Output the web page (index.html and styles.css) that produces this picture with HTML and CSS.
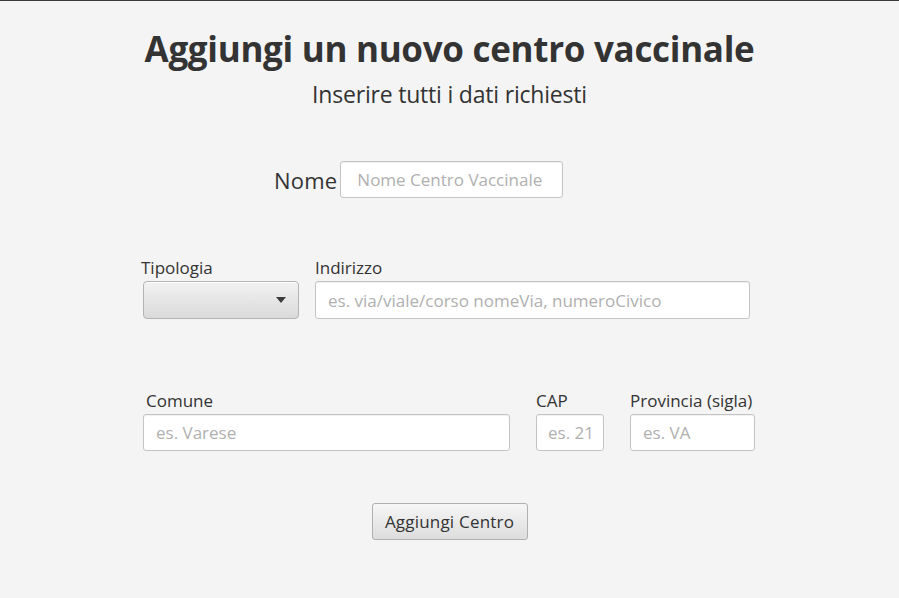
FILE: index.html
```html
<!DOCTYPE html>
<html lang="it">
<head>
<meta charset="utf-8">
<link rel="stylesheet" href="styles.css">
</head>
<body>
<div class="page">
  <h1 class="title">Aggiungi un nuovo centro vaccinale</h1>
  <p class="subtitle">Inserire tutti i dati richiesti</p>

  <div class="row-nome">
    <span class="big-label">Nome</span>
    <div class="field w-nome"><span class="ph">Nome Centro Vaccinale</span></div>
  </div>

  <div class="row row-2">
    <div class="col col-tipo">
      <span class="label">Tipologia</span>
      <div class="combo"><span class="arrow"></span></div>
    </div>
    <div class="col col-ind">
      <span class="label">Indirizzo</span>
      <div class="field w-ind"><span class="ph">es. via/viale/corso nomeVia, numeroCivico</span></div>
    </div>
  </div>

  <div class="row row-3">
    <div class="col col-com">
      <span class="label lbl-com">Comune</span>
      <div class="field w-com"><span class="ph">es. Varese</span></div>
    </div>
    <div class="col col-cap">
      <span class="label">CAP</span>
      <div class="field w-cap"><span class="ph">es. 21</span></div>
    </div>
    <div class="col col-prov">
      <span class="label">Provincia (sigla)</span>
      <div class="field w-prov"><span class="ph">es. VA</span></div>
    </div>
  </div>

  <div class="actions">
    <button class="btn">Aggiungi Centro</button>
  </div>
</div>
</body>
</html>
```

FILE: styles.css
```css
html, body {
  margin: 0;
  padding: 0;
}
body {
  background: #f4f4f4;
  border-top: 1px solid #3a3a3a;
  font-family: "Open Sans", "Noto Sans", sans-serif;
  color: #333333;
  width: 899px;
  height: 597px;
  overflow: hidden;
}
.page {
  display: flex;
  flex-direction: column;
}
.title {
  margin: 24px 0 0 0;
  text-align: center;
  font-size: 35px;
  font-weight: 700;
  line-height: 48px;
  letter-spacing: -0.3px;
  color: #333;
}
.subtitle {
  margin: 6px 0 0 0;
  text-align: center;
  font-size: 23px;
  line-height: 30px;
  letter-spacing: -0.2px;
}
.row-nome {
  display: flex;
  align-items: center;
  margin: 52px 0 0 274px;
  gap: 3px;
}
.big-label {
  font-size: 22px;
  letter-spacing: 0.2px;
  line-height: 30px;
}
.field {
  box-sizing: border-box;
  height: 37px;
  background: #fff;
  border: 1px solid #c4c4c4;
  border-radius: 3px;
  box-shadow: inset 0 1px 1px rgba(0,0,0,0.06);
  display: flex;
  align-items: center;
  padding-left: 12px;
  overflow: hidden;
  white-space: nowrap;
}
.ph {
  font-size: 17px;
  color: #b0b0b0;
  letter-spacing: 0;
}
.w-nome { width: 223px; padding-left: 16px; }
.row {
  display: flex;
  align-items: flex-end;
}
.col {
  display: flex;
  flex-direction: column;
}
.label {
  font-size: 17px;
  line-height: 22px;
  letter-spacing: 0;
  margin-bottom: 2px;
}
.row-2 {
  margin: 59px 0 0 141px;
}
.col-tipo { width: 174px; }
.combo {
  position: relative;
  box-sizing: border-box;
  width: 156px;
  height: 38px;
  margin-left: 2px;
  border: 1px solid #b4b4b4;
  border-radius: 4px;
  background: linear-gradient(#f2f2f2, #dadada);
  box-shadow: inset 0 1px 0 rgba(255,255,255,0.8);
}
.arrow {
  position: absolute;
  right: 12px;
  top: 15px;
  width: 0;
  height: 0;
  border-left: 5px solid transparent;
  border-right: 5px solid transparent;
  border-top: 6px solid #3c3c3c;
}
.w-ind { width: 435px; height: 38px; }
.row-3 {
  margin: 71px 0 0 143px;
}
.lbl-com { margin-left: 3px; }
.col-com { width: 393px; }
.w-com { width: 367px; }
.col-cap { width: 94px; }
.w-cap { width: 68px; padding-left: 11px; }
.w-prov { width: 125px; }
.actions {
  display: flex;
  justify-content: center;
  margin-top: 52px;
}
.btn {
  box-sizing: border-box;
  width: 156px;
  height: 37px;
  font-family: "Open Sans", "Noto Sans", sans-serif;
  font-size: 17px;
  letter-spacing: 0.2px;
  color: #333;
  border: 1px solid #b0b0b0;
  border-radius: 3px;
  background: linear-gradient(#f6f6f6, #dddddd);
  padding: 0;
}
```
